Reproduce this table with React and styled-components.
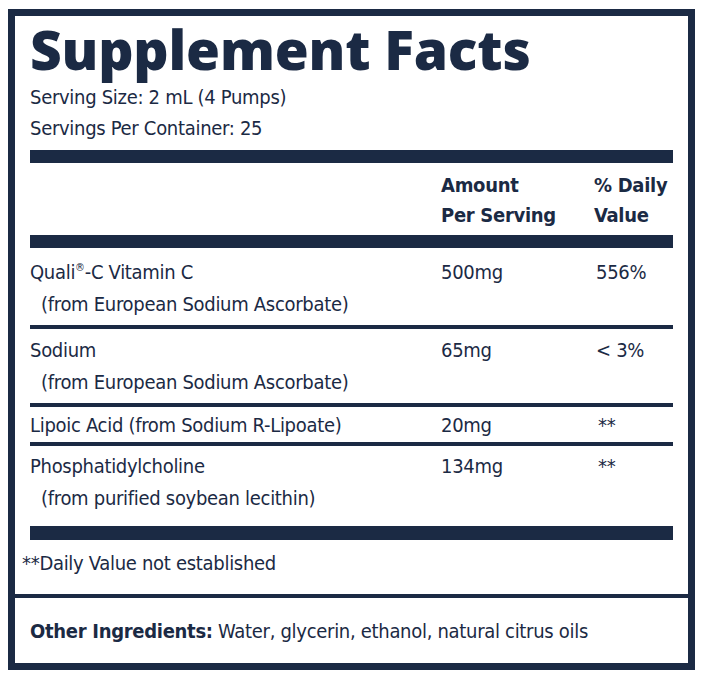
import React from 'react';
import styled, { createGlobalStyle } from 'styled-components';

const navy = '#1b2a44';

const GlobalStyle = createGlobalStyle`
  body {
    margin: 0;
    background: #ffffff;
    color: ${navy};
    font-family: "DejaVu Sans Condensed", "DejaVu Sans", sans-serif;
    font-stretch: condensed;
  }
`;

const Panel = styled.div`
  box-sizing: border-box;
  width: 687px;
  height: 661px;
  margin: 9px 0 0 8px;
  border: 7px solid ${navy};
  display: flex;
  flex-direction: column;
`;

const Top = styled.div`
  padding: 0 15px;
`;

const Title = styled.h1`
  margin: 0;
  font-family: "Open Sans", "Lato", sans-serif;
  font-stretch: normal;
  font-weight: 800;
  font-size: 55px;
  line-height: 66px;
  letter-spacing: -0.2px;
`;

const Line = styled.div`
  font-size: 20px;
  line-height: 31px;
  letter-spacing: -0.3px;
`;

const Bar = styled.div`
  height: ${(p) => p.$h || 13}px;
  background: ${navy};
  margin: ${(p) => p.$m || '0'};
`;

const Row = styled.div`
  display: grid;
  grid-template-columns: 411px 153px 1fr;
  padding: ${(p) => p.$pad || '4px 0'};
  font-size: 20px;
  line-height: ${(p) => (p.$bold ? 30 : 32)}px;
  letter-spacing: -0.3px;
  white-space: nowrap;
  font-weight: ${(p) => (p.$bold ? 700 : 400)};
`;

const Sub = styled.div`
  padding-left: 11px;
`;

const Reg = styled.sup`
  font-size: 11px;
  line-height: 0;
  vertical-align: 8px;
`;

const Cell = styled.div`
  padding-left: ${(p) => p.$indent || 0}px;
`;

const Note = styled.div`
  padding: 7px 0 0 7px;
  height: 47px;
  font-size: 20px;
  line-height: 32px;
  letter-spacing: -0.3px;
`;

const Divider = styled.div`
  height: 4px;
  background: ${navy};
`;

const Other = styled.div`
  flex: 1;
  display: flex;
  align-items: center;
  padding: 0 15px;
  font-size: 20px;
  letter-spacing: -0.3px;
  b {
    font-weight: 700;
  }
`;

const rows = [
  { name: <>Quali<Reg>®</Reg>-C Vitamin C</>, sub: '(from European Sodium Ascorbate)', amt: '500mg', dv: '556%', pad: '8px 0 5px' },
  { name: 'Sodium', sub: '(from European Sodium Ascorbate)', amt: '65mg', dv: '< 3%', pad: '5px 0 5px' },
  { name: 'Lipoic Acid (from Sodium R-Lipoate)', amt: '20mg', dv: '**', dvIndent: 4, pad: '2px 0 1px' },
  { name: 'Phosphatidylcholine', sub: '(from purified soybean lecithin)', amt: '134mg', dv: '**', dvIndent: 4, pad: '4px 0 12px' },
];

export default function App() {
  return (
    <>
      <GlobalStyle />
      <Panel>
        <Top>
          <Title>Supplement Facts</Title>
          <Line>Serving Size: 2 mL (4 Pumps)</Line>
          <Line>Servings Per Container: 25</Line>
          <Bar $m="6px 0 0" />
          <Row $bold $pad="7px 0 5px">
            <div />
            <div>Amount<br />Per Serving</div>
            <div>% Daily<br />Value</div>
          </Row>
          <Bar />
          {rows.map((r, i) => (
            <React.Fragment key={r.amt}>
              <Row $pad={r.pad}>
                <div>
                  {r.name}
                  {r.sub && <Sub>{r.sub}</Sub>}
                </div>
                <div>{r.amt}</div>
                <Cell $indent={r.dvIndent || 2}>{r.dv}</Cell>
              </Row>
              {i < rows.length - 1 ? <Bar $h={4} /> : <Bar $h={14} />}
            </React.Fragment>
          ))}
        </Top>
        <Note>**Daily Value not established</Note>
        <Divider />
        <Other>
          <span><b>Other Ingredients:</b> Water, glycerin, ethanol, natural citrus oils</span>
        </Other>
      </Panel>
    </>
  );
}
